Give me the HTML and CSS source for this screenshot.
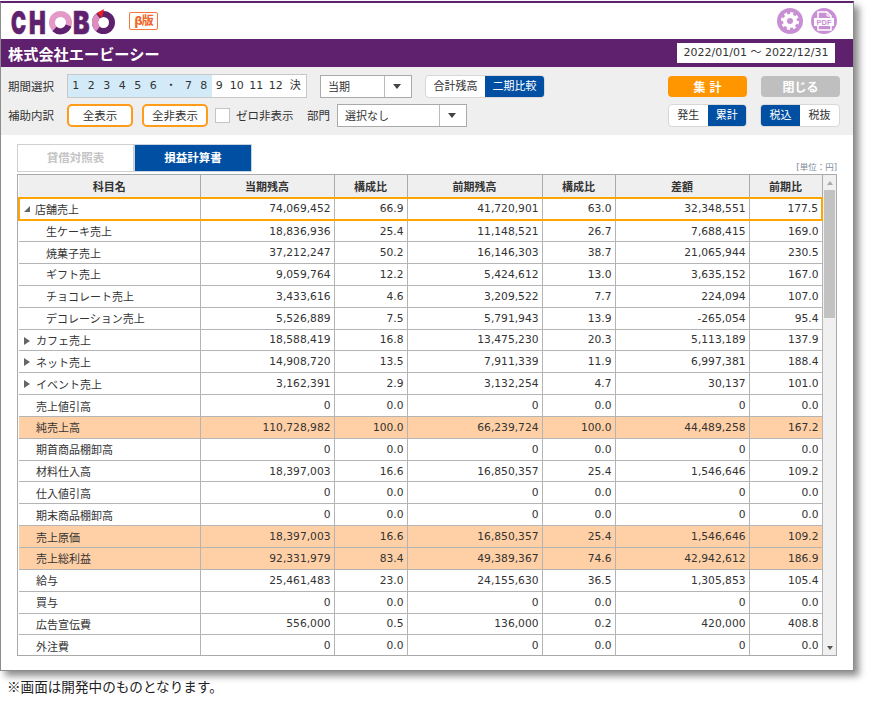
FILE: index.html
```html
<!DOCTYPE html>
<html lang="ja">
<head>
  <meta charset="UTF-8"/>
  <title>CHOBO 損益計算書</title>
  <link rel="stylesheet" href="styles.css">
</head>
<body>

<div class="window">
  <header class="top">
    <svg class="logo" width="108" height="28" viewBox="0 0 108 28">
      <text class="logo-text" transform="translate(0 27) scale(.65 1)">C</text>
      <text class="logo-text" transform="translate(18 27) scale(.72 1)">H</text>
      <circle cx="49.500" cy="15.500" r="8.500" fill="none" stroke="#e39ac7" stroke-width="6"/>
      <path d="M57.500 18.500a8.500 8.500 0 0 1-14 3.500" fill="none" stroke="#5f216d" stroke-width="6"/>
      <text class="logo-text" transform="translate(62 27) scale(.8 1)">B</text>
      <circle cx="92.500" cy="15.500" r="8.500" fill="none" stroke="#5f216d" stroke-width="6"/>
      <path d="M87 9a8.500 8.500 0 0 0 0 13" fill="none" stroke="#e08cc0" stroke-width="6"/>
      <path d="M86 6l5 5 2-9z" fill="#ee1c25"/>
    </svg>
    <span class="beta">β版</span>
    <div class="top-icons">
      <span class="round-icon">
        <svg width="18" height="18" viewBox="0 0 18 18">
          <circle cx="9" cy="9" r="5" fill="none" stroke="#fff" stroke-width="4"/>
          <circle cx="9" cy="9" r="7.500" fill="none" stroke="#fff" stroke-width="3" stroke-dasharray="2.950 2.940"/>
        </svg>
      </span>
      <span class="round-icon">
        <svg width="20" height="20" viewBox="0 0 20 20">
          <path d="M4 1h9l4 4v14H4z" fill="none" stroke="#fff" stroke-width="1.500"/>
          <path d="M13 1v4h4" fill="none" stroke="#fff"/>
          <rect x="0" y="7" width="20" height="8" fill="#fff"/>
          <text class="pdf-text" x="10" y="14" text-anchor="middle">PDF</text>
        </svg>
      </span>
    </div>
  </header>

  <div class="company">
    <h1>株式会社エービーシー</h1>
    <div class="date-range">2022/01/01 ～ 2022/12/31</div>
  </div>

  <div class="toolbar">
    <div class="tool-row">
      <span class="label">期間選択</span>
      <div class="periods">
        <span class="on">1</span><span class="on">2</span><span class="on">3</span><span class="on">4</span><span class="on">5</span><span class="on">6</span><span class="on dot">・</span><span class="on seven">7</span><span class="on">8</span><span>9</span><span class="wide">10</span><span class="wide">11</span><span class="wide">12</span><span class="wide">決</span>
      </div>
      <div class="select select-term"><span class="select-text">当期</span><span class="select-arrow"></span></div>
      <div class="toggle toggle-mode"><span>合計残高</span><span class="active">二期比較</span></div>
      <div class="right-group actions">
        <button class="action action-go">集 計</button>
        <button class="action action-close">閉じる</button>
      </div>
    </div>
    <div class="tool-row">
      <span class="label">補助内訳</span>
      <button class="outline">全表示</button>
      <button class="outline">全非表示</button>
      <span class="check"></span>
      <span class="check-label">ゼロ非表示</span>
      <span class="dept-label">部門</span>
      <div class="select select-dept"><span class="select-text">選択なし</span><span class="select-arrow"></span></div>
      <div class="right-group">
        <div class="toggle toggle-small"><span>発生</span><span class="active">累計</span></div>
        <div class="toggle toggle-small toggle-tax"><span class="active">税込</span><span>税抜</span></div>
      </div>
    </div>
  </div>

  <div class="content">
    <div class="tabs">
      <span class="tab">貸借対照表</span>
      <span class="tab tab-active">損益計算書</span>
      <span class="unit">[単位：円]</span>
    </div>

    <div class="table-wrap">
      <table class="report">
        <colgroup>
          <col class="c-name"><col class="c-amount"><col class="c-ratio"><col class="c-amount2"><col class="c-ratio"><col class="c-amount"><col class="c-ratio">
        </colgroup>
        <thead>
          <tr><th>科目名</th><th>当期残高</th><th>構成比</th><th>前期残高</th><th>構成比</th><th>差額</th><th>前期比</th></tr>
        </thead>
        <tbody>
          <tr class="selected"><td><i class="tri tri-open"></i>店舗売上</td><td>74,069,452</td><td>66.9</td><td>41,720,901</td><td>63.0</td><td>32,348,551</td><td>177.5</td></tr>
          <tr class="child"><td>生ケーキ売上</td><td>18,836,936</td><td>25.4</td><td>11,148,521</td><td>26.7</td><td>7,688,415</td><td>169.0</td></tr>
          <tr class="child"><td>焼菓子売上</td><td>37,212,247</td><td>50.2</td><td>16,146,303</td><td>38.7</td><td>21,065,944</td><td>230.5</td></tr>
          <tr class="child"><td>ギフト売上</td><td>9,059,764</td><td>12.2</td><td>5,424,612</td><td>13.0</td><td>3,635,152</td><td>167.0</td></tr>
          <tr class="child"><td>チョコレート売上</td><td>3,433,616</td><td>4.6</td><td>3,209,522</td><td>7.7</td><td>224,094</td><td>107.0</td></tr>
          <tr class="child"><td>デコレーション売上</td><td>5,526,889</td><td>7.5</td><td>5,791,943</td><td>13.9</td><td>-265,054</td><td>95.4</td></tr>
          <tr><td><i class="tri"></i>カフェ売上</td><td>18,588,419</td><td>16.8</td><td>13,475,230</td><td>20.3</td><td>5,113,189</td><td>137.9</td></tr>
          <tr><td><i class="tri"></i>ネット売上</td><td>14,908,720</td><td>13.5</td><td>7,911,339</td><td>11.9</td><td>6,997,381</td><td>188.4</td></tr>
          <tr><td><i class="tri"></i>イベント売上</td><td>3,162,391</td><td>2.9</td><td>3,132,254</td><td>4.7</td><td>30,137</td><td>101.0</td></tr>
          <tr><td>売上値引高</td><td>0</td><td>0.0</td><td>0</td><td>0.0</td><td>0</td><td>0.0</td></tr>
          <tr class="total"><td>純売上高</td><td>110,728,982</td><td>100.0</td><td>66,239,724</td><td>100.0</td><td>44,489,258</td><td>167.2</td></tr>
          <tr><td>期首商品棚卸高</td><td>0</td><td>0.0</td><td>0</td><td>0.0</td><td>0</td><td>0.0</td></tr>
          <tr><td>材料仕入高</td><td>18,397,003</td><td>16.6</td><td>16,850,357</td><td>25.4</td><td>1,546,646</td><td>109.2</td></tr>
          <tr><td>仕入値引高</td><td>0</td><td>0.0</td><td>0</td><td>0.0</td><td>0</td><td>0.0</td></tr>
          <tr><td>期末商品棚卸高</td><td>0</td><td>0.0</td><td>0</td><td>0.0</td><td>0</td><td>0.0</td></tr>
          <tr class="total"><td>売上原価</td><td>18,397,003</td><td>16.6</td><td>16,850,357</td><td>25.4</td><td>1,546,646</td><td>109.2</td></tr>
          <tr class="total"><td>売上総利益</td><td>92,331,979</td><td>83.4</td><td>49,389,367</td><td>74.6</td><td>42,942,612</td><td>186.9</td></tr>
          <tr><td>給与</td><td>25,461,483</td><td>23.0</td><td>24,155,630</td><td>36.5</td><td>1,305,853</td><td>105.4</td></tr>
          <tr><td>買与</td><td>0</td><td>0.0</td><td>0</td><td>0.0</td><td>0</td><td>0.0</td></tr>
          <tr><td>広告宣伝費</td><td>556,000</td><td>0.5</td><td>136,000</td><td>0.2</td><td>420,000</td><td>408.8</td></tr>
          <tr><td>外注費</td><td>0</td><td>0.0</td><td>0</td><td>0.0</td><td>0</td><td>0.0</td></tr>
        </tbody>
      </table>
      <div class="scrollbar">
        <span class="scroll-btn"><i class="scroll-up"></i></span>
        <span class="scroll-thumb"></span>
        <span class="scroll-rest"></span>
        <span class="scroll-btn"><i class="scroll-down"></i></span>
      </div>
    </div>
  </div>
</div>

<p class="note">※画面は開発中のものとなります。</p>

</body>
</html>
```

FILE: styles.css
```css
* { box-sizing: border-box; }
body {
  margin: 0;
  background: #fff;
  color: #333;
  font-family: "DejaVu Sans", "Noto Sans CJK JP", sans-serif;
  font-size: 11px;
}
.window {
  width: 854px;
  height: 670px;
  background: #fff;
  border: 1px solid #8c8c8c;
  border-top: 2px solid #5f216d;
  margin-top: 1px;
  box-shadow: 5px 5px 7px rgba(0,0,0,.45);
}

/* header */
.top {
  height: 36px;
  display: flex;
  align-items: center;
  padding: 0 16px 0 10px;
}
.logo { display: block; overflow: visible; }
.logo-text {
  font-family: Inter, sans-serif;
  font-weight: 900;
  font-size: 31px;
  fill: #5f216d;
  stroke: #5f216d;
  stroke-width: .6px;
}
.beta {
  margin-left: 10px;
  width: 29px;
  height: 18px;
  border: 1px solid #f47a3a;
  border-radius: 2px;
  color: #f0672a;
  font-size: 12px;
  font-weight: bold;
  line-height: 16px;
  text-align: center;
  white-space: nowrap;
  letter-spacing: -1px;
}
.top-icons { margin-left: auto; display: flex; gap: 8px; }
.round-icon {
  width: 26px;
  height: 26px;
  border-radius: 50%;
  background: #c98fd4;
  display: flex;
  align-items: center;
  justify-content: center;
}
.pdf-text {
  font-family: "Liberation Sans", sans-serif;
  font-weight: bold;
  font-size: 7.500px;
  fill: #c98fd4;
}
.company {
  height: 28px;
  background: #5f216d;
  display: flex;
  align-items: center;
  justify-content: space-between;
  padding: 0 18px 0 7px;
}
.company h1 {
  margin: 0;
  color: #fff;
  font-size: 15.200px;
  font-weight: bold;
}
.date-range {
  background: #fff;
  width: 158px;
  height: 20px;
  line-height: 20px;
  text-align: center;
  color: #333;
  font-size: 11px;
}

/* toolbar */
.toolbar {
  height: 68px;
  background: #efefef;
  padding: 7px 13px 0 7px;
}
.tool-row {
  display: flex;
  align-items: center;
  height: 24px;
  margin-bottom: 5px;
}
.label { width: 59px; font-size: 11.500px; }
.periods {
  display: flex;
  width: 240px;
  height: 24px;
  border: 1px solid #c8c8c8;
  background: #fff;
  font-size: 11px;
  line-height: 22px;
  text-align: center;
}
.periods span { width: 15.500px; }
.periods span.on { background: #d3ebf9; }
.periods span.dot { width: 20px; }
.periods span.seven { width: 15px; }
.periods span.wide { width: 19.500px; }
.select {
  display: flex;
  height: 23px;
  background: #fff;
  border: 1px solid #aaa;
  align-items: center;
}
.select-term { width: 92px; margin-left: 13px; }
.select-dept { width: 130px; margin-left: 7px; }
.select-text { flex: 1; padding-left: 7px; }
.select-arrow {
  width: 27px;
  height: 100%;
  border-left: 1px solid #bbb;
  position: relative;
}
.select-arrow::after {
  content: "";
  position: absolute;
  left: 8px;
  top: 8px;
  border: 4px solid transparent;
  border-width: 5px 4.500px 0;
  border-top-color: #444;
}
.toggle {
  display: flex;
  height: 23px;
  background: #fff;
  border: 1px solid #d8d8d8;
  border-radius: 4px;
  overflow: hidden;
  line-height: 21px;
  text-align: center;
}
.toggle span { flex: 1; }
.toggle .active { background: #004fa2; color: #fff; }
.toggle-mode { width: 120px; margin-left: 13px; }
.toggle-small { width: 79px; }
.toggle-tax { width: 80px; }
.right-group {
  margin-left: auto;
  display: flex;
  gap: 13px;
}
.actions { gap: 14px; }
.action {
  width: 79px;
  height: 21px;
  border: 0;
  border-radius: 4px;
  color: #fff;
  font: bold 12px "DejaVu Sans", "Noto Sans CJK JP", sans-serif;
}
.action-go { background: #ff9600; }
.action-close { background: #bfbfbf; }
.outline {
  width: 66px;
  height: 23px;
  margin-right: 9px;
  background: #fff;
  border: 2px solid #ff9c1a;
  border-radius: 5px;
  color: #333;
  font: 11.500px "DejaVu Sans", "Noto Sans CJK JP", sans-serif;
  padding: 0;
}
.check {
  width: 15px;
  height: 15px;
  margin-left: -2px;
  background: #fff;
  border: 1px solid #c4c4c4;
}
.check-label { margin-left: 6px; font-size: 11.500px; width: 71px; }
.dept-label { font-size: 11.500px; }

/* tabs + table */
.content { padding: 9px 16px 0; }
.tabs {
  display: flex;
  height: 28px;
  margin-bottom: 2px;
}
.tab {
  width: 117px;
  height: 28px;
  border: 1px solid #d0d0d0;
  color: #c4c4c4;
  font-weight: bold;
  font-size: 11.500px;
  line-height: 26px;
  text-align: center;
}
.tab-active {
  width: 118px;
  background: #004fa2;
  border-color: #c9d4e0;
  color: #fff;
}
.unit {
  margin-left: auto;
  margin-bottom: -1px;
  align-self: flex-end;
  color: #7a8a9a;
  font-size: 8.500px;
  line-height: 12px;
}
.table-wrap {
  display: flex;
  width: 820px;
  height: 482px;
  border: 1px solid #aaa;
  overflow: hidden;
}
.report {
  width: 803px;
  height: fit-content;
  table-layout: fixed;
  border-collapse: collapse;
}
.c-name { width: 181px; }
.c-amount { width: 134px; }
.c-amount2 { width: 135px; }
.c-ratio { width: 73px; }
.report th {
  height: 23px;
  background: #efefef;
  border-right: 1px solid #aaa;
  border-bottom: 1px solid #aaa;
  font-size: 11px;
  font-weight: bold;
  padding: 0;
}
.report td {
  height: 21.850px;
  padding: 0 3px;
  border-right: 1px solid #b4b4b4;
  border-bottom: 1px solid #b4b4b4;
  font-size: 10.700px;
  text-align: right;
  white-space: nowrap;
}
.report td:first-child {
  font-size: 11px;
  text-align: left;
  padding-left: 17px;
  position: relative;
}
.report .child td:first-child { padding-left: 27px; }
.total td { background: #ffd0a6; }
.selected td {
  border-top: 2px solid #ffa500;
  border-bottom: 2px solid #ffa500;
}
.selected td:first-child { border-left: 2px solid #ffa500; padding-left: 15px; }
.selected td:last-child { border-right: 2px solid #ffa500; }
.tri {
  position: absolute;
  left: 5px;
  top: 7px;
  border-style: solid;
  border-width: 4px 0 4px 6px;
  border-color: transparent transparent transparent #666;
}
.tri-open {
  left: 4px;
  top: 7px;
  border-width: 0 0 6px 6px;
  border-color: transparent transparent #666 transparent;
}
.scrollbar {
  width: 15px;
  display: flex;
  flex-direction: column;
  background: #f0f0f0;
}
.scroll-btn {
  height: 15px;
  display: flex;
  align-items: center;
  justify-content: center;
}
.scroll-up {
  border-style: solid;
  border-width: 0 3.500px 4px;
  border-color: transparent transparent #aaa;
}
.scroll-down {
  border-style: solid;
  border-width: 4px 3.500px 0;
  border-color: #555 transparent transparent;
}
.scroll-thumb { height: 128px; background: #c2c2c2; margin: 0 1px; }
.scroll-rest { flex: 1; }
.note {
  margin: 5px 0 0 7px;
  color: #222;
  font-family: "Noto Sans CJK JP", sans-serif;
  font-size: 13.600px;
}
```
